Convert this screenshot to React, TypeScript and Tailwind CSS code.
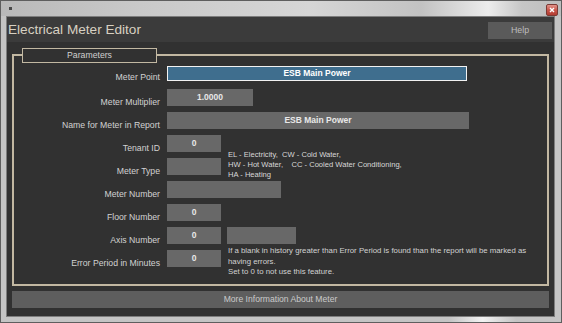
import React from "react";

const font = { fontFamily: '"Liberation Sans", Arial, sans-serif' };

function Label({ children, h = 17 }: { children: React.ReactNode; h?: number }) {
  return (
    <div
      className={`flex items-end justify-end whitespace-nowrap text-[8.7px] leading-[8px] text-[#d2d2d2] ${
        h === 15 ? "h-[15px]" : "h-[17px]"
      }`}
    >
      {children}
    </div>
  );
}

function Box({ value, className = "" }: { value?: string; className?: string }) {
  return (
    <div
      className={`flex h-[17px] items-center justify-center bg-[#686868] text-[8.5px] font-bold leading-none text-[#e8e8e8] ${className}`}
    >
      {value}
    </div>
  );
}

export default function App() {
  return (
    <div
      style={font}
      className="flex h-[323px] w-[562px] flex-col border border-[#5e5e5e] bg-[#c4c4c4]"
    >
      {/* title bar */}
      <div className="flex h-[15px] items-center justify-between bg-[linear-gradient(90deg,#b9b9b9_0%,#c9c9c9_25%,#d6d6d6_55%,#c2c2c2_75%,#ececec_87%,#c6c6c6_93%,#bdbdbd_100%)] pl-[8px] pr-[3px]">
        <div className="h-[3px] w-[3px] bg-[#4a4a4a]" />
        <div className="mt-[3px] flex h-[12px] w-[12px] items-center justify-center rounded-[2px] border border-[#7c3a34] bg-[linear-gradient(180deg,#e3938a_0%,#c9574c_50%,#b23c31_100%)]">
          <svg width="6" height="6" viewBox="0 0 6 6">
            <path d="M1 1L5 5M5 1L1 5" stroke="#ffffff" strokeWidth="1.4" />
          </svg>
        </div>
      </div>

      {/* middle */}
      <div className="flex flex-1 pl-[5px] pr-[6px]">
        <div className="flex flex-1 flex-col border border-[#7d7d7d] bg-[#313131]">
          {/* header */}
          <div className="flex h-[25px] items-start justify-between bg-[#3b3b3b] pl-[1px] pr-[2px]">
            <div className="mt-[4.5px] whitespace-nowrap text-[13.6px] leading-[16px] text-[#d7d0c1]">
              Electrical Meter Editor
            </div>
            <div className="mt-[5px] flex h-[17px] w-[64px] items-center justify-center bg-[#5a5a5a] text-[8.8px] leading-none text-[#bdbdbd]">
              Help
            </div>
          </div>

          {/* body */}
          <div className="flex flex-1 flex-col px-[5px] pt-[12px]">
            <div className="relative h-[232px] border-2 border-[#c2b8a2] pt-[10px]">
              <div className="absolute left-[8px] top-[-8px] flex h-[15px] w-[135px] items-center justify-center border border-[#c2b8a2] bg-[#313131] text-[8.7px] leading-none text-[#d0d0d0]">
                Parameters
              </div>

              <div className="grid grid-cols-[146px_54px_1fr] grid-rows-[repeat(9,23px)] gap-x-[7px]">
                {/* row 1 */}
                <Label h={15}>Meter Point</Label>
                <div className="col-span-2 flex h-[15px] w-[300px] items-center justify-center border border-[#f2f2f2] bg-[#3f6e8e] text-[8.5px] font-bold leading-none text-white">
                  ESB Main Power
                </div>

                {/* row 2 */}
                <Label>Meter Multiplier</Label>
                <Box value="1.0000" className="col-span-2 w-[86px]" />

                {/* row 3 */}
                <Label>Name for Meter in Report</Label>
                <Box value="ESB Main Power" className="col-span-2 w-[302px]" />

                {/* row 4 */}
                <Label>Tenant ID</Label>
                <Box value="0" />
                <div className="row-span-2 whitespace-pre pt-[14.5px] text-[7.6px] leading-[10px] text-[#d8d8d8]">
                  {"EL - Electricity,  CW - Cold Water,\nHW - Hot Water,    CC - Cooled Water Conditioning,\nHA - Heating"}
                </div>

                {/* row 5 */}
                <Label>Meter Type</Label>
                <Box />

                {/* row 6 */}
                <Label>Meter Number</Label>
                <Box className="col-span-2 w-[114px]" />

                {/* row 7 */}
                <Label>Floor Number</Label>
                <Box value="0" />
                <div />

                {/* row 8 */}
                <Label>Axis Number</Label>
                <Box value="0" />
                <Box className="ml-[-1px] w-[69px]" />

                {/* row 9 */}
                <Label>Error Period in Minutes</Label>
                <Box value="0" />
                <div className="mt-[-3.6px] whitespace-pre text-[7.8px] leading-[10.25px] text-[#d2d2d2]">
                  {"If a blank in history greater than Error Period is found than the report will be marked as\nhaving errors.\nSet to 0 to not use this feature."}
                </div>
              </div>
            </div>

            <div className="mt-[5px] flex h-[17px] items-center justify-center bg-[#5e5e5e] text-[8.6px] leading-none text-[#cacaca]">
              More Information About Meter
            </div>
          </div>
        </div>
      </div>

      {/* bottom frame */}
      <div className="h-[5px] bg-[linear-gradient(90deg,#c4c4c4_0%,#c4c4c4_80%,#f2f2f2_86%,#c4c4c4_92%)]" />
    </div>
  );
}
